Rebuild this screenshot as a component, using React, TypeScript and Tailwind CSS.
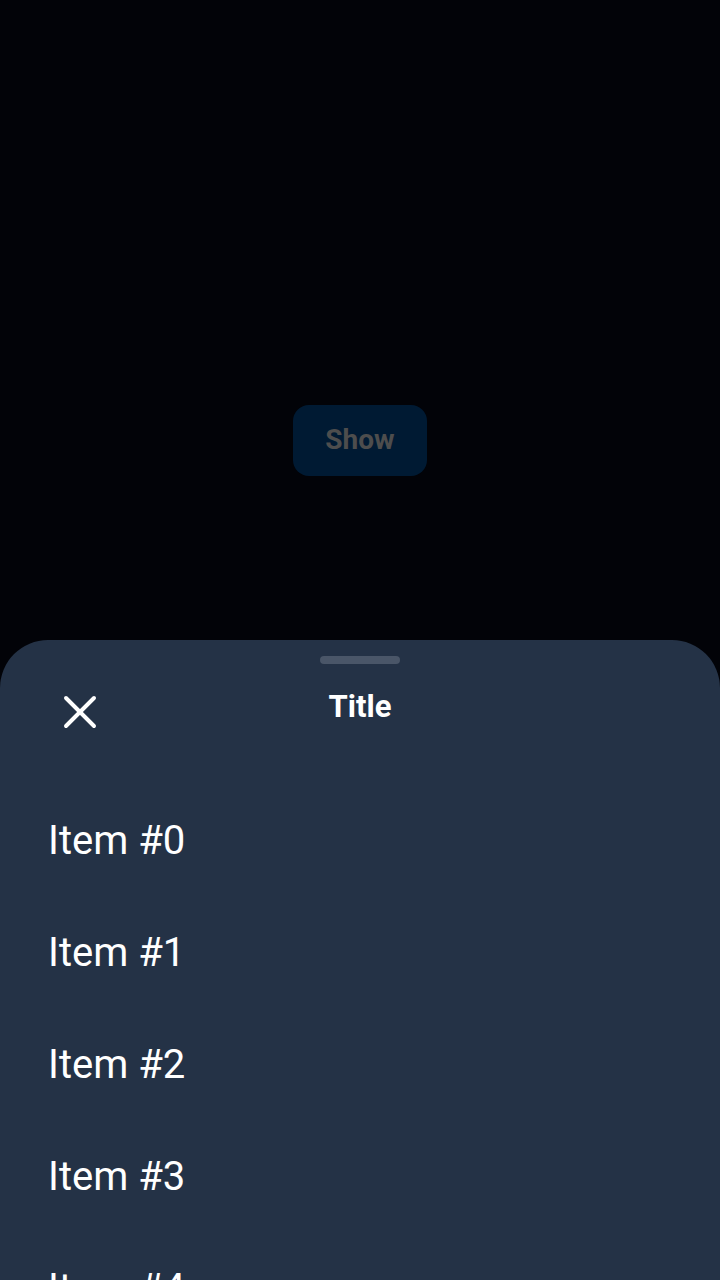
import { X } from "lucide-react";

const items = [0, 1, 2, 3, 4, 5];

export default function App() {
  return (
    <div
      className="relative h-[1280px] w-[720px] overflow-hidden bg-[#020308]"
      style={{ fontFamily: "Roboto, 'Noto Sans', sans-serif" }}
    >
      {/* page behind the sheet */}
      <div className="flex h-[880px] items-center justify-center">
        <button className="flex h-[71px] w-[134px] items-center justify-center rounded-[16px] bg-[#001a33] text-[28px] font-bold text-[#4d4d4d]">
          Show
        </button>
      </div>

      {/* bottom sheet */}
      <div className="absolute inset-x-0 top-[640px] bottom-0 rounded-t-[48px] bg-[#243246]">
        <div className="flex justify-center pt-4">
          <div className="h-2 w-20 rounded-full bg-[#4a5668]" />
        </div>
        <div className="relative mt-3 flex h-[88px] items-center justify-center">
          <button className="absolute left-[52px] top-[8px] flex h-14 w-14 items-center justify-center text-white">
            <X size={56} strokeWidth={1.7} />
          </button>
          <h2 className="-mt-[26px] text-[31px] font-bold text-white">Title</h2>
        </div>
        <ul className="flex flex-col pt-[21px]">
          {items.map((i) => (
            <li
              key={i}
              className="flex h-[112px] items-center px-12 text-[40px] text-white"
            >
              Item #{i}
            </li>
          ))}
        </ul>
      </div>
    </div>
  );
}
